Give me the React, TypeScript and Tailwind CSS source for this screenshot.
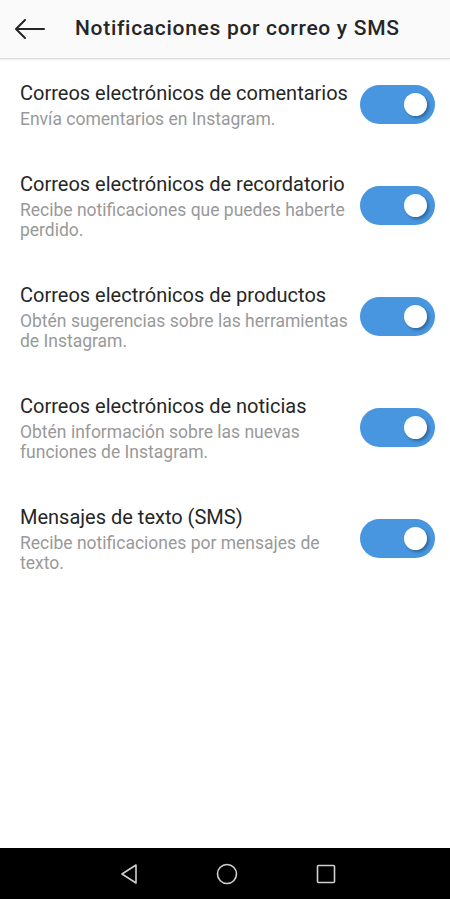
import React from "react";

const rows = [
  { t: "Correos electrónicos de comentarios", s: "Envía comentarios en Instagram." },
  { t: "Correos electrónicos de recordatorio", s: "Recibe notificaciones que puedes haberte perdido." },
  { t: "Correos electrónicos de productos", s: "Obtén sugerencias sobre las herramientas de Instagram." },
  { t: "Correos electrónicos de noticias", s: "Obtén información sobre las nuevas funciones de Instagram." },
  { t: "Mensajes de texto (SMS)", s: "Recibe notificaciones por mensajes de texto." },
];

function Toggle() {
  return (
    <div className="relative w-[75px] h-[39px] rounded-full bg-[#4796df] shrink-0">
      <div className="absolute left-[44px] top-[8px] w-[23px] h-[23px] rounded-full bg-white shadow-[2px_2px_3px_rgba(0,0,0,0.3)]" />
    </div>
  );
}

export default function App() {
  return (
    <div className="w-[450px] h-[899px] flex flex-col bg-white" style={{ fontFamily: "Roboto, 'Noto Sans', sans-serif" }}>
      <div className="h-[59px] flex items-center bg-[#fafafa] border-b border-[#dcdcdc] shadow-[0_1px_2px_rgba(0,0,0,0.08)] shrink-0">
        <svg width="32" height="20" viewBox="0 0 32 20" className="ml-[14px]" fill="none" stroke="#262626" strokeWidth="2" strokeLinecap="round" strokeLinejoin="round">
          <path d="M30 10H2M11 1L2 10l9 9" />
        </svg>
        <div className="ml-[29px] text-[21px] font-medium text-[#262626] tracking-[0.7px]">Notificaciones por correo y SMS</div>
      </div>
      <div className="flex-1 flex flex-col gap-[42px] pt-[21px] pl-[20px] pr-[15px]">
        {rows.map((r) => (
          <div key={r.t} className="flex items-center justify-between">
            <div className="flex-1 min-w-0 pr-[4px]">
              <div className="text-[20px] leading-[26px] text-[#262626]">{r.t}</div>
              <div className="mt-[3px] text-[17.5px] leading-[20px] text-[#999999]">{r.s}</div>
            </div>
            <Toggle />
          </div>
        ))}
      </div>
      <div className="h-[51px] bg-black flex items-center justify-center shrink-0">
        <div className="flex items-center gap-[78px] ml-[6px]">
          <svg width="18" height="22" viewBox="0 0 18 22" fill="none" stroke="#d0d0d0" strokeWidth="1.6" strokeLinejoin="round">
            <path d="M16 2L2 11l14 9z" />
          </svg>
          <svg width="22" height="22" viewBox="0 0 22 22" fill="none" stroke="#d0d0d0" strokeWidth="1.6">
            <circle cx="11" cy="11" r="9.5" />
          </svg>
          <svg width="20" height="20" viewBox="0 0 20 20" fill="none" stroke="#d0d0d0" strokeWidth="1.6">
            <rect x="1.5" y="1.5" width="17" height="17" rx="1" />
          </svg>
        </div>
      </div>
    </div>
  );
}
